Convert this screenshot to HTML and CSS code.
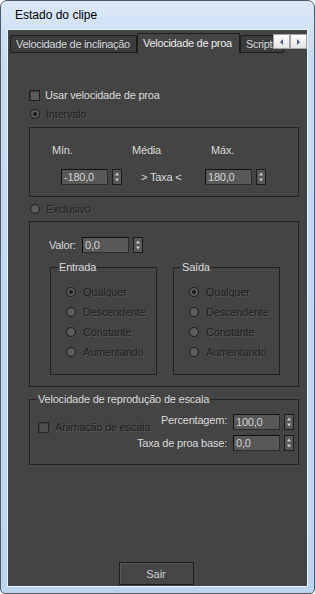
FILE: index.html
```html
<!DOCTYPE html>
<html lang="pt">

<head>
    <meta charset="UTF-8">
    <meta name="viewport" content="width=device-width, initial-scale=1.0">
    <title>Estado do clipe</title>
    <link rel="stylesheet" href="styles.css">
</head>

<body>
    <div class="window">
        <div class="titlebar">Estado do clipe</div>
        <div class="client">
            <div class="tabstrip">
                <div class="tab tabFirst">Velocidade de inclinação</div>
                <div class="tab tabActive">Velocidade de proa</div>
                <div class="tab">Scripts</div>
                <div class="tabScroll">
                    <span class="scrollBtn"><i class="arrowLeft"></i></span>
                    <span class="scrollBtn"><i class="arrowRight"></i></span>
                </div>
            </div>

            <div class="page">
                <div class="settings">
                    <div class="checkRow">
                        <span class="check"></span>
                        <span>Usar velocidade de proa</span>
                    </div>
                    <div class="radioRow intervalRow">
                        <svg class="radio" width="10" height="10" viewBox="0 0 10 10"><circle cx="5" cy="5" r="4.5" fill="#5c5c5c" stroke="#1c1c1c"/><circle cx="5" cy="5" r="2" fill="#1c1c1c"/></svg>
                        <span class="disabled">Intervalo</span>
                    </div>

                    <div class="group range">
                        <div class="labels">
                            <span class="lblMin">Mín.</span>
                            <span class="lblMid">Média</span>
                            <span>Máx.</span>
                        </div>
                        <div class="inputs">
                            <div class="spinner">
                                <span class="field">-180,0</span>
                                <svg class="spin" width="10" height="16" viewBox="0 0 10 16"><rect x="0.5" y="0.5" width="9" height="15" fill="#575757" stroke="#1c1c1c"/><path d="M3 6.5h4L5 3.5z" fill="#d0d0d0"/><path d="M3 9.5h4L5 12.5z" fill="#d0d0d0"/></svg>
                            </div>
                            <span class="rate">&gt; Taxa &lt;</span>
                            <div class="spinner">
                                <span class="field">180,0</span>
                                <svg class="spin" width="10" height="16" viewBox="0 0 10 16"><rect x="0.5" y="0.5" width="9" height="15" fill="#575757" stroke="#1c1c1c"/><path d="M3 6.5h4L5 3.5z" fill="#d0d0d0"/><path d="M3 9.5h4L5 12.5z" fill="#d0d0d0"/></svg>
                            </div>
                        </div>
                    </div>

                    <div class="radioRow exclusiveRow">
                        <svg class="radio" width="10" height="10" viewBox="0 0 10 10"><circle cx="5" cy="5" r="4.5" fill="#5c5c5c" stroke="#1c1c1c"/></svg>
                        <span class="disabled">Exclusivo</span>
                    </div>

                    <div class="group exclusive">
                        <div class="valueRow">
                            <span class="valueLabel">Valor:</span>
                            <div class="spinner">
                                <span class="field">0,0</span>
                                <svg class="spin" width="10" height="16" viewBox="0 0 10 16"><rect x="0.5" y="0.5" width="9" height="15" fill="#575757" stroke="#1c1c1c"/><path d="M3 6.5h4L5 3.5z" fill="#d0d0d0"/><path d="M3 9.5h4L5 12.5z" fill="#d0d0d0"/></svg>
                            </div>
                        </div>
                        <div class="subGroups">
                            <fieldset class="box sub">
                                <legend>Entrada</legend>
                                <div class="subList">
                                    <div class="radioRow subRow">
                                        <svg class="radio" width="10" height="10" viewBox="0 0 10 10"><circle cx="5" cy="5" r="4.5" fill="#5c5c5c" stroke="#1c1c1c"/><circle cx="5" cy="5" r="2" fill="#1c1c1c"/></svg>
                                        <span class="disabled">Qualquer</span>
                                    </div>
                                    <div class="radioRow subRow">
                                        <svg class="radio" width="10" height="10" viewBox="0 0 10 10"><circle cx="5" cy="5" r="4.5" fill="#5c5c5c" stroke="#1c1c1c"/></svg>
                                        <span class="disabled">Descendente</span>
                                    </div>
                                    <div class="radioRow subRow">
                                        <svg class="radio" width="10" height="10" viewBox="0 0 10 10"><circle cx="5" cy="5" r="4.5" fill="#5c5c5c" stroke="#1c1c1c"/></svg>
                                        <span class="disabled">Constante</span>
                                    </div>
                                    <div class="radioRow subRow">
                                        <svg class="radio" width="10" height="10" viewBox="0 0 10 10"><circle cx="5" cy="5" r="4.5" fill="#5c5c5c" stroke="#1c1c1c"/></svg>
                                        <span class="disabled">Aumentando</span>
                                    </div>
                                </div>
                            </fieldset>
                            <fieldset class="box sub">
                                <legend>Saída</legend>
                                <div class="subList">
                                    <div class="radioRow subRow">
                                        <svg class="radio" width="10" height="10" viewBox="0 0 10 10"><circle cx="5" cy="5" r="4.5" fill="#5c5c5c" stroke="#1c1c1c"/><circle cx="5" cy="5" r="2" fill="#1c1c1c"/></svg>
                                        <span class="disabled">Qualquer</span>
                                    </div>
                                    <div class="radioRow subRow">
                                        <svg class="radio" width="10" height="10" viewBox="0 0 10 10"><circle cx="5" cy="5" r="4.5" fill="#5c5c5c" stroke="#1c1c1c"/></svg>
                                        <span class="disabled">Descendente</span>
                                    </div>
                                    <div class="radioRow subRow">
                                        <svg class="radio" width="10" height="10" viewBox="0 0 10 10"><circle cx="5" cy="5" r="4.5" fill="#5c5c5c" stroke="#1c1c1c"/></svg>
                                        <span class="disabled">Constante</span>
                                    </div>
                                    <div class="radioRow subRow">
                                        <svg class="radio" width="10" height="10" viewBox="0 0 10 10"><circle cx="5" cy="5" r="4.5" fill="#5c5c5c" stroke="#1c1c1c"/></svg>
                                        <span class="disabled">Aumentando</span>
                                    </div>
                                </div>
                            </fieldset>
                        </div>
                    </div>

                    <fieldset class="box scale">
                        <legend>Velocidade de reprodução de escala</legend>
                        <div class="scaleBody">
                            <div class="checkRow scaleCheck">
                                <span class="check checkDisabled"></span>
                                <span class="disabled">Animação de escala</span>
                            </div>
                            <div class="scaleFields">
                                <div class="fieldRow">
                                    <span class="fieldLabel pctLabel">Percentagem:</span>
                                    <div class="spinner">
                                        <span class="field">100,0</span>
                                        <svg class="spin" width="10" height="16" viewBox="0 0 10 16"><rect x="0.5" y="0.5" width="9" height="15" fill="#575757" stroke="#1c1c1c"/><path d="M3 6.5h4L5 3.5z" fill="#d0d0d0"/><path d="M3 9.5h4L5 12.5z" fill="#d0d0d0"/></svg>
                                    </div>
                                </div>
                                <div class="fieldRow">
                                    <span class="fieldLabel">Taxa de proa base:</span>
                                    <div class="spinner">
                                        <span class="field">0,0</span>
                                        <svg class="spin" width="10" height="16" viewBox="0 0 10 16"><rect x="0.5" y="0.5" width="9" height="15" fill="#575757" stroke="#1c1c1c"/><path d="M3 6.5h4L5 3.5z" fill="#d0d0d0"/><path d="M3 9.5h4L5 12.5z" fill="#d0d0d0"/></svg>
                                    </div>
                                </div>
                            </div>
                        </div>
                    </fieldset>
                </div>

                <div class="footer">
                    <button class="btn">Sair</button>
                </div>
            </div>
        </div>
    </div>
</body>

</html>
```

FILE: styles.css
```css
* {
    box-sizing: border-box;
}

body {
    margin: 0;
    background: #ffffff;
    font-family: "Liberation Sans", Arial, sans-serif;
    font-size: 11px;
}

.window {
    width: 315px;
    height: 594px;
    border: 1px solid #4f5b6b;
    border-radius: 7px 7px 5px 5px;
    background: linear-gradient(#dbe8f8, #c6dbf2 60px, #bdd4ef);
    padding: 0 6px 6px 6px;
    display: flex;
    flex-direction: column;
}

.titlebar {
    height: 28px;
    line-height: 28px;
    padding-left: 8px;
    font-size: 12px;
    color: #000000;
}

.client {
    flex: 1;
    border: 1px solid #e9f1fa;
    background: #444444;
    display: flex;
    flex-direction: column;
}

/* tabs */
.tabstrip {
    position: relative;
    height: 23px;
    padding: 3px 0 0 2px;
    display: flex;
    align-items: flex-end;
    overflow: hidden;
}

.tab {
    height: 18px;
    padding: 1px 5px 0 5px;
    line-height: 14px;
    border: 1px solid #1d1d1d;
    border-radius: 2px 2px 0 0;
    background: #3c3c3c;
    color: #d2d6dc;
    white-space: nowrap;
    letter-spacing: -0.3px;
    flex-shrink: 0;
    overflow: hidden;
}

.tabFirst {
    width: 127px;
}

.tabActive {
    width: 103px;
    height: 20px;
    padding-top: 2px;
    border-bottom: none;
    background: #444444;
    color: #ececec;
}

.tabScroll {
    position: absolute;
    top: 4px;
    right: 0;
    display: flex;
}

.scrollBtn {
    width: 17px;
    height: 15px;
    border: 1px solid #a3a3a3;
    background: linear-gradient(#fdfdfd, #e4e4e4);
    display: flex;
    align-items: center;
    justify-content: center;
}

.arrowLeft {
    border-top: 3px solid transparent;
    border-bottom: 3px solid transparent;
    border-right: 3px solid #4b5c78;
}

.arrowRight {
    border-top: 3px solid transparent;
    border-bottom: 3px solid transparent;
    border-left: 3px solid #4b5c78;
}

/* page */
.page {
    flex: 1;
    display: flex;
    flex-direction: column;
    padding-bottom: 1px;
    color: #dadada;
    letter-spacing: -0.2px;
    white-space: nowrap;
}

.settings {
    padding: 35px 0 0 21px;
    display: flex;
    flex-direction: column;
    align-items: flex-start;
}

.checkRow {
    display: flex;
    align-items: center;
    height: 14px;
    gap: 5px;
}

.check {
    width: 11px;
    height: 11px;
    flex-shrink: 0;
    border: 1px solid #1e1e1e;
    background: #5a5a5a;
    box-shadow: inset 1px 1px 0 #3c3c3c;
}

.checkDisabled {
    background: #4e4e4e;
    border-color: #262626;
}

.radioRow {
    display: flex;
    align-items: center;
    height: 14px;
    gap: 6px;
    padding-left: 1px;
}

.intervalRow {
    margin-top: 5px;
}

.exclusiveRow {
    margin-top: 5px;
}

.disabled {
    color: #202020;
    text-shadow: 1px 1px 0 #585858;
}

.group {
    width: 270px;
    border: 1px solid #212121;
}

.range {
    height: 70px;
    margin-top: 6px;
    padding-top: 15px;
}

.labels {
    display: flex;
    height: 14px;
    line-height: 14px;
    padding-left: 22px;
}

.lblMin {
    width: 80px;
}

.lblMid {
    width: 79px;
}

.inputs {
    display: flex;
    align-items: center;
    height: 16px;
    margin-top: 12px;
    padding-left: 31px;
}

.spinner {
    display: flex;
    gap: 4px;
}

.field {
    width: 47px;
    height: 16px;
    padding-left: 2px;
    line-height: 14px;
    background: #585858;
    border: 1px solid #111111;
    border-right-color: #2e2e2e;
    border-bottom-color: #2e2e2e;
    color: #d4d4d4;
}

.rate {
    width: 64px;
    margin-left: 19px;
}

.exclusive {
    margin-top: 5px;
    padding: 15px 0 11px 0;
}

.valueRow {
    display: flex;
    align-items: center;
    height: 16px;
    padding-left: 19px;
}

.valueLabel {
    width: 33px;
}

.subGroups {
    display: flex;
    gap: 16px;
    margin-top: 7px;
    padding-left: 20px;
}

fieldset.box {
    margin: 0;
    padding: 0;
    min-width: 0;
    border: 1px solid #212121;
}

legend {
    margin-left: 7px;
    padding: 0 1px;
    line-height: 14px;
}

.sub {
    width: 107px;
}

.subList {
    display: flex;
    flex-direction: column;
    gap: 6px;
    padding: 11px 0 15px 14px;
}

.subRow {
    gap: 7px;
}

.scale {
    width: 270px;
    margin-top: 5px !important;
}

.scaleBody {
    display: flex;
    justify-content: space-between;
    align-items: flex-start;
    padding: 8px 4px 13px 8px;
}

.scaleCheck {
    width: 96px;
    flex-shrink: 0;
    margin-top: 6px;
    gap: 6px;
}

.scaleFields {
    display: flex;
    flex-direction: column;
    gap: 5px;
}

.fieldRow {
    display: flex;
    align-items: center;
    justify-content: flex-end;
    height: 16px;
}

.fieldLabel {
    margin-right: 6px;
}

.pctLabel {
    position: relative;
    top: -2px;
}

/* footer */
.footer {
    margin-top: auto;
    display: flex;
    justify-content: center;
    padding-right: 3px;
}

.btn {
    width: 75px;
    height: 23px;
    border: 1px solid #1c1c1c;
    background: #464646;
    box-shadow: inset 1px 1px 0 #585858;
    color: #cfcfcf;
    font-family: inherit;
    font-size: 11px;
}
```
